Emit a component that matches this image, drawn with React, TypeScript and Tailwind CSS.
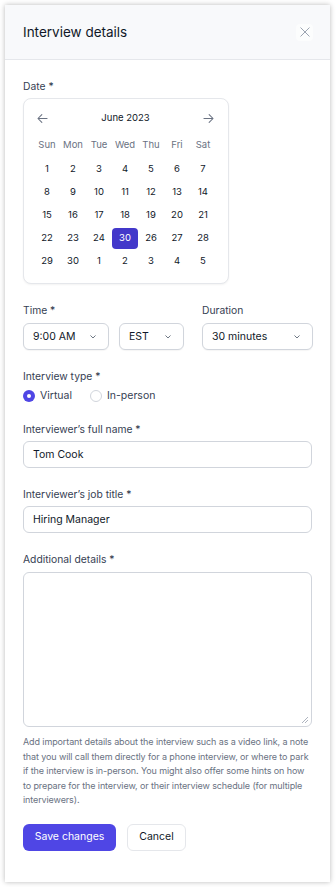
import React from 'react';

const weekdays = ['Sun', 'Mon', 'Tue', 'Wed', 'Thu', 'Fri', 'Sat'];

const weeks = [
  ['1', '2', '3', '4', '5', '6', '7'],
  ['8', '9', '10', '11', '12', '13', '14'],
  ['15', '16', '17', '18', '19', '20', '21'],
  ['22', '23', '24', '30', '26', '27', '28'],
  ['29', '30', '1', '2', '3', '4', '5'],
];

function Chevron() {
  return (
    <svg width="10" height="10" viewBox="0 0 20 20" fill="none" className="text-gray-600">
      <path d="M5.5 7.5 10 12l4.5-4.5" stroke="currentColor" strokeWidth="1.6" strokeLinecap="round" strokeLinejoin="round" />
    </svg>
  );
}

function Arrow({ dir }: { dir: 'left' | 'right' }) {
  return (
    <svg width="13" height="13" viewBox="0 0 20 20" fill="none" className="text-gray-500">
      {dir === 'left' ? (
        <path d="M17 10H3.5M9 4 3 10l6 6" stroke="currentColor" strokeWidth="1.6" strokeLinecap="round" strokeLinejoin="round" />
      ) : (
        <path d="M3 10h13.5M11 4l6 6-6 6" stroke="currentColor" strokeWidth="1.6" strokeLinecap="round" strokeLinejoin="round" />
      )}
    </svg>
  );
}

function Select({ value, className }: { value: string; className: string }) {
  return (
    <div
      className={`flex h-[27px] items-center justify-between rounded-md border border-gray-300 bg-white pl-[9px] pr-[10px] text-[10.5px] leading-[14px] text-gray-900 shadow-[0_1px_1px_rgba(0,0,0,0.04)] ${className}`}
    >
      <span>{value}</span>
      <Chevron />
    </div>
  );
}

function Label({ children, className = '' }: { children: React.ReactNode; className?: string }) {
  return <div className={`text-[10.3px] leading-[14px] text-gray-700 ${className}`}>{children}</div>;
}

export default function App() {
  return (
    <div className="min-h-screen bg-white pt-[5px] pl-[5px]" style={{ fontFamily: 'Inter, "Noto Sans", sans-serif' }}>
      <div className="h-[877px] w-[325px] overflow-hidden bg-white shadow-[0_0_5px_rgba(0,0,0,0.28)]">
        <header className="flex h-[55px] items-center justify-between border-b border-gray-200 bg-[#f8f9fb] pl-[18px] pr-[17px]">
          <h1 className="text-[13.5px] text-gray-900">Interview details</h1>
          <button className="flex h-[17px] w-[17px] items-center justify-center rounded bg-white/60 text-gray-400">
            <svg width="14" height="14" viewBox="0 0 20 20" fill="none">
              <path d="M4 4l12 12M16 4 4 16" stroke="currentColor" strokeWidth="1.4" strokeLinecap="round" />
            </svg>
          </button>
        </header>

        <div className="px-[18px] pt-[19px]">
          <Label>Date *</Label>
          <div className="mt-[5px] w-[206px] rounded-lg border border-gray-200 bg-white pt-[9px] pb-[10px] pl-[10px] pr-[12px] shadow-[0_1px_2px_rgba(0,0,0,0.05)]">
            <div className="flex h-[20px] items-center justify-between pl-[2px] pr-[1px]">
              <Arrow dir="left" />
              <span className="text-[9.5px] text-gray-900">June 2023</span>
              <Arrow dir="right" />
            </div>
            <div className="mt-[7px] grid h-[20px] grid-cols-7 items-center text-center text-[9.5px] text-gray-500">
              {weekdays.map((d) => (
                <span key={d}>{d}</span>
              ))}
            </div>
            <div className="mt-[3px]">
              {weeks.map((week, wi) => (
                <div key={wi} className="grid h-[23px] grid-cols-7 items-center">
                  {week.map((day, di) => {
                    const selected = wi === 3 && di === 3;
                    return (
                      <div key={di} className="flex justify-center">
                        <span
                          className={`flex h-[21px] w-[26px] items-center justify-center rounded text-[9.5px] ${
                            selected ? 'bg-[#4338ca] text-white' : 'text-gray-900'
                          }`}
                        >
                          {day}
                        </span>
                      </div>
                    );
                  })}
                </div>
              ))}
            </div>
          </div>

          <div className="mt-[19px] flex">
            <div>
              <Label>Time *</Label>
              <div className="mt-[6px] flex gap-[10px]">
                <Select value="9:00 AM" className="w-[86px]" />
                <Select value="EST" className="w-[65px]" />
              </div>
            </div>
            <div className="ml-[18px]">
              <Label>Duration</Label>
              <Select value="30 minutes" className="mt-[6px] w-[111px]" />
            </div>
          </div>

          <Label className="mt-[19px]">Interview type *</Label>
          <div className="mt-[6px] flex h-[14px] items-center text-[10.5px] leading-[14px] text-gray-700">
            <span className="flex h-[12px] w-[12px] items-center justify-center rounded-full bg-[#4f46e5]">
              <span className="h-[4px] w-[4px] rounded-full bg-white" />
            </span>
            <span className="ml-[5px]">Virtual</span>
            <span className="ml-[18px] h-[12px] w-[12px] rounded-full border border-gray-300 bg-white" />
            <span className="ml-[5px]">In-person</span>
          </div>

          <Label className="mt-[19px]">Interviewer’s full name *</Label>
          <div className="mt-[5px] flex h-[27px] items-center rounded-md border border-gray-300 pl-[9px] text-[10.5px] text-gray-900">
            Tom Cook
          </div>

          <Label className="mt-[19px]">Interviewer’s job title *</Label>
          <div className="mt-[5px] flex h-[27px] items-center rounded-md border border-gray-300 pl-[9px] text-[10.5px] text-gray-900">
            Hiring Manager
          </div>

          <Label className="mt-[19px]">Additional details *</Label>
          <div className="relative mt-[6px] h-[155px] rounded-md border border-gray-300">
            <svg width="8" height="8" viewBox="0 0 8 8" className="absolute right-[2px] bottom-[2px] text-gray-400">
              <path d="M7 1 1 7M7 4 4 7" stroke="currentColor" strokeWidth="0.8" />
            </svg>
          </div>
          <p className="mt-[8px] text-[9px] leading-[14.5px] tracking-[-0.012em] text-gray-500">
            Add important details about the interview such as a video link, a note that you will call them directly for a
            phone interview, or where to park if the interview is in-person. You might also offer some hints on how to
            prepare for the interview, or their interview schedule (for multiple interviewers).
          </p>

          <div className="mt-[16px] flex gap-[11px]">
            <button className="h-[27px] w-[93px] rounded-md bg-[#4f46e5] text-[10.5px] text-white">Save changes</button>
            <button className="h-[27px] w-[59px] rounded-md border border-gray-200 bg-white text-[10.5px] text-gray-900">
              Cancel
            </button>
          </div>
        </div>
      </div>
    </div>
  );
}
